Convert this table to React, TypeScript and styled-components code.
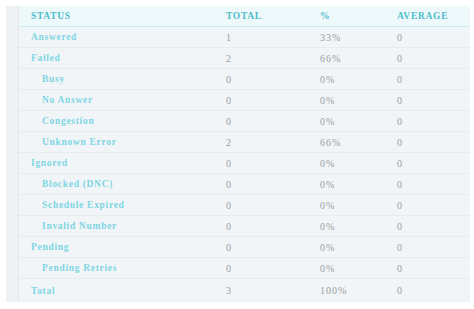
import styled, { createGlobalStyle } from 'styled-components';

type Row = { label: string; total: string; pct: string; avg: string; sub?: boolean };

const rows: Row[] = [
  { label: 'Answered', total: '1', pct: '33%', avg: '0' },
  { label: 'Failed', total: '2', pct: '66%', avg: '0' },
  { label: 'Busy', total: '0', pct: '0%', avg: '0', sub: true },
  { label: 'No Answer', total: '0', pct: '0%', avg: '0', sub: true },
  { label: 'Congestion', total: '0', pct: '0%', avg: '0', sub: true },
  { label: 'Unknown Error', total: '2', pct: '66%', avg: '0', sub: true },
  { label: 'Ignored', total: '0', pct: '0%', avg: '0' },
  { label: 'Blocked (DNC)', total: '0', pct: '0%', avg: '0', sub: true },
  { label: 'Schedule Expired', total: '0', pct: '0%', avg: '0', sub: true },
  { label: 'Invalid Number', total: '0', pct: '0%', avg: '0', sub: true },
  { label: 'Pending', total: '0', pct: '0%', avg: '0' },
  { label: 'Pending Retries', total: '0', pct: '0%', avg: '0', sub: true },
  { label: 'Total', total: '3', pct: '100%', avg: '0' },
];

const App = () => {
  return (
    <>
      <GlobalStyle />
      <Panel>
        <Table>
          <HeaderRow>
            <HeadCell>STATUS</HeadCell>
            <HeadCell>TOTAL</HeadCell>
            <HeadCell>%</HeadCell>
            <HeadCell>AVERAGE</HeadCell>
          </HeaderRow>
          {rows.map((row, idx) => (
            <BodyRow key={idx} last={idx === rows.length - 1}>
              <Label sub={row.sub}>{row.label}</Label>
              <Value>{row.total}</Value>
              <Value>{row.pct}</Value>
              <Value>{row.avg}</Value>
            </BodyRow>
          ))}
        </Table>
      </Panel>
    </>
  );
};

const GlobalStyle = createGlobalStyle`
  html, body {
    margin: 0;
    padding: 0;
    background: #ffffff;
  }
  body {
    font-family: "Liberation Serif", "Times New Roman", serif;
  }
`;

const Panel = styled.div`
  margin: 6px 4px 0 6px;
  padding-left: 12px;
  background-color: #eef2f5;
  width: 452px;
`;

const Table = styled.div`
  border-left: 1px solid #e2e7eb;
  background-color: #f2f5f8;
`;

const Grid = styled.div`
  display: grid;
  grid-template-columns: 195px 94px 77px 1fr;
  align-items: center;
  padding-left: 12px;
  height: 21px;
`;

const HeaderRow = styled(Grid)`
  background-color: #eef9fb;
  border-bottom: 1px solid #c8edf3;
  height: 20px;
`;

const BodyRow = styled(Grid)<{ last?: boolean }>`
  border-bottom: ${p => (p.last ? 'none' : '1px solid #e6ecf0')};
  height: ${p => (p.last ? '23px' : '20px')};
`;

const HeadCell = styled.div`
  font-size: 9.5px;
  font-weight: bold;
  letter-spacing: 0.7px;
  color: #4dbccb;
  white-space: nowrap;
`;

const Label = styled.div<{ sub?: boolean }>`
  font-size: 9.5px;
  font-weight: bold;
  letter-spacing: 0.7px;
  color: #7ed6e3;
  padding-left: ${p => (p.sub ? '11px' : '0')};
  white-space: nowrap;
`;

const Value = styled.div`
  font-size: 10px;
  letter-spacing: 1px;
  color: #999da1;
`;

export default App;
